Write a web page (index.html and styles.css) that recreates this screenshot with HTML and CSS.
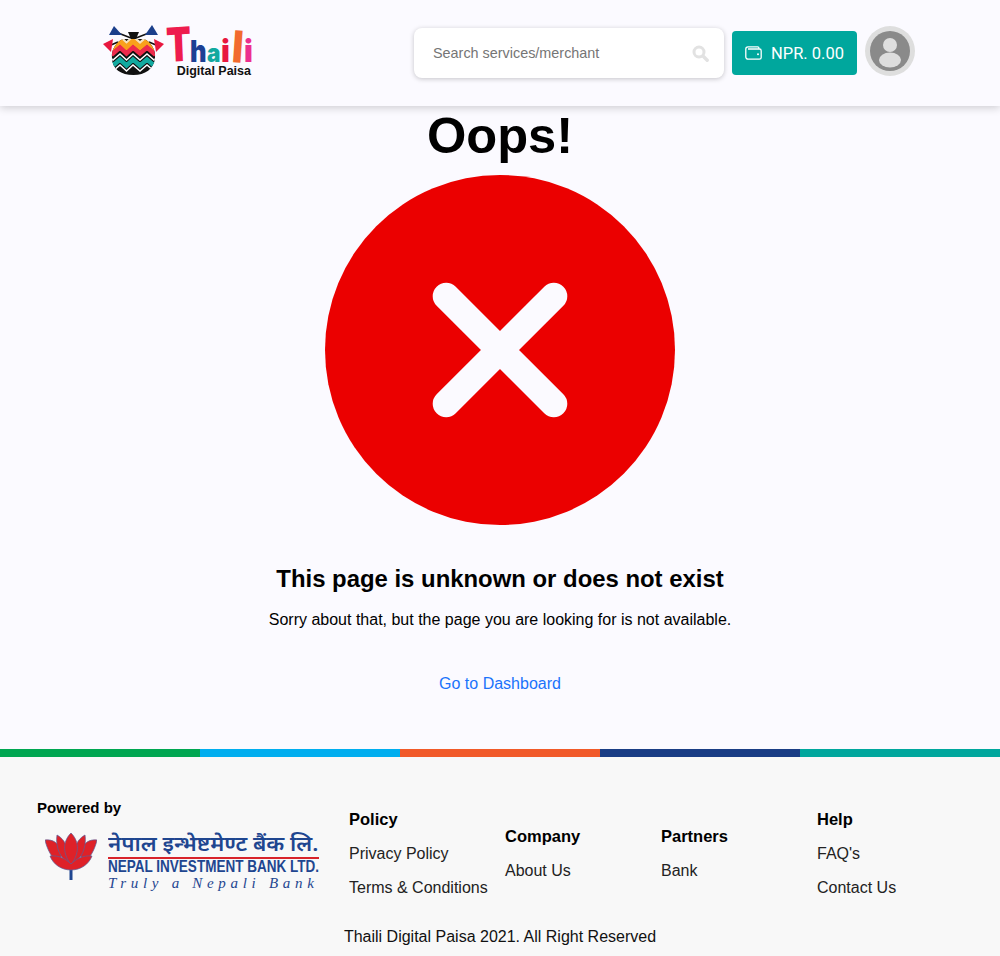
FILE: index.html
```html
<!DOCTYPE html>
<html lang="en">
<head>
<meta charset="utf-8">
<title>Thaili Digital Paisa</title>
<link rel="stylesheet" href="styles.css">
</head>
<body>
<header class="topbar">
  <a class="logo" href="#">
    <svg class="logo-bag" width="61" height="52" viewBox="0 0 61 52">
      <defs>
        <clipPath id="bag"><path d="M20 14 H41 C48 17 53 25 52 33 C51 44 42 50 30.500 50 C18 50 9 44 9 33 C8 25 13 17 20 14 Z"/></clipPath>
        <path id="zig" d="M3 0 L10 6 L17 0 L23.500 6 L30 0 L37 6 L44 0 L51 6 L58 0" fill="none"/>
      </defs>
      <path d="M10 6 L28 13 M51 6 L33 13 M8 20 L15 17 M53 20 L46 17" stroke="#111" stroke-width="1.500" fill="none"/>
      <path d="M11 1 L6 10 L19 10 Z" fill="#1b3f8b"/>
      <path d="M49 0 L55 10 L42 10 Z" fill="#1b3f8b"/>
      <path d="M0 19 L10 14 L8 27 Z" fill="#e8173f"/>
      <path d="M61 19 L51 14 L53 27 Z" fill="#e8173f"/>
      <path d="M25 7 H36 L33 14 H28 Z" fill="#111"/>
      <g clip-path="url(#bag)">
        <rect x="5" y="10" width="52" height="42" fill="#111"/>
        <use href="#zig" y="12" stroke="#f5e2c0" stroke-width="3"/>
        <use href="#zig" y="16.500" stroke="#f9a11b" stroke-width="5.500"/>
        <use href="#zig" y="22.500" stroke="#ee2a4b" stroke-width="4.500"/>
        <use href="#zig" y="29" stroke="#fff" stroke-width="1.500"/>
        <use href="#zig" y="34.500" stroke="#12a99f" stroke-width="4.500"/>
        <use href="#zig" y="40" stroke="#fff" stroke-width="1.500"/>
      </g>
    </svg>
    <span class="logo-text">
      <span class="logo-word"><b class="l-t">T</b><b class="l-h">h</b><b class="l-a">a</b><b class="l-i">i</b><b class="l-l">l</b><b class="l-j">i</b></span>
      <span class="logo-sub">Digital Paisa</span>
    </span>
  </a>
  <div class="actions">
    <div class="search">
      <span class="search-text">Search services/merchant</span>
      <svg class="search-icon" width="17" height="17" viewBox="0 0 17 17"><circle cx="7" cy="7" r="5" fill="none" stroke="#e2e2e2" stroke-width="3"/><path d="M11 11 L15.200 15.200" stroke="#e2e2e2" stroke-width="3.400" stroke-linecap="round"/></svg>
    </div>
    <a class="wallet" href="#">
      <svg width="17" height="14" viewBox="0 0 17 14"><path d="M14 3 V2.200 A1.400 1.400 0 0 0 12.600 .8 H3 A2.200 2.200 0 0 0 .8 3 V11 A2.200 2.200 0 0 0 3 13.200 H14.400 A1.800 1.800 0 0 0 16.200 11.400 V4.800 A1.800 1.800 0 0 0 14.400 3 H3" fill="none" stroke="#fff" stroke-width="1.300"/><circle cx="13" cy="8.200" r="1" fill="#fff"/></svg>
      <span>NPR. 0.00</span>
    </a>
    <div class="avatar">
      <svg width="40" height="40" viewBox="0 0 40 40"><circle cx="20" cy="20" r="20" fill="#8a8a8a"/><circle cx="20" cy="14" r="7" fill="#dedede"/><ellipse cx="20" cy="29" rx="11" ry="7.500" fill="#dedede"/></svg>
    </div>
  </div>
</header>

<main class="error">
  <h1 class="oops">Oops!</h1>
  <svg class="cross" width="350" height="350" viewBox="0 0 350 350">
    <circle cx="175" cy="175" r="175" fill="#eb0000"/>
    <path d="M121.200 121.200 L228.800 228.800 M228.800 121.200 L121.200 228.800" stroke="#fbfaff" stroke-width="27" stroke-linecap="round"/>
  </svg>
  <h2 class="title">This page is unknown or does not exist</h2>
  <p class="message">Sorry about that, but the page you are looking for is not available.</p>
  <a class="back" href="#">Go to Dashboard</a>
</main>

<div class="stripes"><span class="s1"></span><span class="s2"></span><span class="s3"></span><span class="s4"></span><span class="s5"></span></div>

<footer class="footer">
  <div class="footer-cols">
    <div class="powered">
      <div class="powered-label">Powered by</div>
      <div class="bank">
        <svg class="lotus" width="52" height="48" viewBox="0 0 52 48">
          <path d="M26 47 V32" stroke="#1f4690" stroke-width="3"/>
          <g fill="#de2128" stroke="#5a5f9a" stroke-width=".7">
            <path d="M0 7 C8 6 14 10 17 20 L14 30 C7 26 2 16 0 7 Z"/>
            <path d="M52 7 C44 6 38 10 35 20 L38 30 C45 26 50 16 52 7 Z"/>
            <path d="M12 2 C19 6 23 12 25 30 C16 28 10 14 12 2 Z"/>
            <path d="M40 2 C33 6 29 12 27 30 C36 28 42 14 40 2 Z"/>
            <path d="M26 0 C33 7 36 18 26 32 C16 18 19 7 26 0 Z"/>
            <path d="M5 23 C14 22 21 26 26 31 C31 26 38 22 47 23 C44 31 36 37 26 37 C16 37 8 31 5 23 Z"/>
          </g>
        </svg>
        <div class="bank-text">
          <div class="bank-np">नेपाल इन्भेष्टमेण्ट बैंक लि.</div>
          <div class="bank-en"><span class="bank-en-inner">NEPAL INVESTMENT BANK LTD.</span></div>
          <div class="bank-tag">Truly a Nepali Bank</div>
        </div>
      </div>
    </div>
    <nav class="col col-high">
      <h3>Policy</h3>
      <a href="#">Privacy Policy</a>
      <a href="#">Terms &amp; Conditions</a>
    </nav>
    <nav class="col col-mid">
      <h3>Company</h3>
      <a href="#">About Us</a>
    </nav>
    <nav class="col col-mid">
      <h3>Partners</h3>
      <a href="#">Bank</a>
    </nav>
    <nav class="col col-high">
      <h3>Help</h3>
      <a href="#">FAQ's</a>
      <a href="#">Contact Us</a>
    </nav>
  </div>
  <p class="copy">Thaili Digital Paisa 2021. All Right Reserved</p>
</footer>
</body>
</html>
```
FILE: styles.css
```css
* { box-sizing: border-box; }
html, body { margin: 0; padding: 0; }
body {
  width: 1000px;
  height: 956px;
  overflow: hidden;
  background: #fbfaff;
  color: #000;
  font-family: "Liberation Sans", Arial, sans-serif;
  font-size: 16px;
}
a { text-decoration: none; color: inherit; }

.topbar {
  height: 106px;
  padding: 25px 85px 0 103px;
  display: flex;
  justify-content: space-between;
  align-items: flex-start;
  background: #fbfaff;
  box-shadow: 0 2px 8px rgba(0,0,0,.18);
}
.logo { display: flex; gap: 3px; align-items: flex-start; }
.logo-bag { display: block; }
.logo-text { display: flex; flex-direction: column; align-items: flex-end; width: 86px; }
.logo-word { display: flex; align-items: baseline; width: 86px; height: 38px; margin-top: 1px; margin-bottom: 1px; font-family: Inter, sans-serif; line-height: 38px; }
.logo-word b { font-weight: 900; display: block; }
.l-t { color: #ee1c4e; font-size: 47px; width: 23px; transform: scaleX(.77) rotate(-3deg); transform-origin: left bottom; }
.l-h { color: #1c3f94; font-size: 30px; width: 17px; transform: scaleX(.85); transform-origin: left bottom; }
.l-a { color: #12a99f; font-size: 25px; width: 14px; transform: scaleX(.9); transform-origin: left bottom; }
.l-i { color: #e8173f; font-size: 30px; width: 10px; }
.l-l { color: #f26a2e; font-size: 44px; width: 13px; transform: rotate(4deg) scaleX(.85); transform-origin: left bottom; }
.l-j { color: #ec2f8f; font-size: 30px; width: 9px; }
.logo-sub { font-size: 12.500px; font-weight: 700; line-height: 13px; color: #111; margin-right: 2px; white-space: nowrap; }

.actions { display: flex; align-items: flex-start; gap: 8px; }
.search {
  width: 310px;
  height: 50px;
  margin-top: 3px;
  padding: 0 15px 0 19px;
  display: flex;
  align-items: center;
  justify-content: space-between;
  background: #fff;
  border-radius: 8px;
  box-shadow: 0 1px 5px rgba(0,0,0,.22);
}
.search-text { font-size: 14.400px; color: #757575; }
.wallet {
  width: 125px;
  height: 44px;
  margin-top: 6px;
  display: flex;
  align-items: center;
  justify-content: center;
  gap: 9px;
  background: #00a79d;
  border-radius: 4px;
  color: #fff;
  font-family: Roboto, sans-serif;
  font-size: 16.500px;
}
.avatar {
  width: 50px;
  height: 50px;
  margin-top: 1px;
  display: flex;
  align-items: center;
  justify-content: center;
  background: #dedede;
  border-radius: 50%;
}
.avatar svg { display: block; }

.error { display: flex; flex-direction: column; align-items: center; text-align: center; height: 643px; }
.oops { margin: 0; font-size: 50.600px; line-height: 60px; font-weight: 700; }
.cross { display: block; margin-top: 9px; }
.title { margin: 39px 0 0; font-size: 23.900px; line-height: 29px; font-weight: 700; }
.message { margin: 15px 0 0; font-size: 16px; line-height: 24px; }
.back { margin-top: 40px; color: #1a73fb; line-height: 24px; }

.stripes { display: flex; height: 8px; }
.stripes span { flex: 1; }
.s1 { background: #00a651; }
.s2 { background: #00aeef; }
.s3 { background: #f15a29; }
.s4 { background: #1a3d85; }
.s5 { background: #00a79d; }

.footer { height: 199px; background: #f8f8f8; padding: 43px 0 0 37px; }
.footer-cols { display: flex; }
.powered { width: 312px; }
.powered-label { font-size: 15px; font-weight: 700; line-height: 15px; }
.bank { display: flex; gap: 11px; margin: 18px 0 0 8px; color: #1f4690; }
.lotus { display: block; flex: none; }
.bank-text { width: 211px; }
.bank-np { font-family: "Noto Sans", "DejaVu Sans", sans-serif; font-size: 20px; font-weight: 600; line-height: 22px; height: 22px; white-space: nowrap; transform: scaleX(1.115); transform-origin: left; }
.bank-en { margin-top: 2px; border-top: 2px solid #d8232a; height: 18px; font-weight: 700; font-size: 16.700px; line-height: 16px; white-space: nowrap; }
.bank-en-inner { display: block; transform: scaleX(.81); transform-origin: left; }
.bank-tag { font-family: "Liberation Serif", serif; font-style: italic; font-size: 15px; letter-spacing: 4.700px; line-height: 16px; white-space: nowrap; }

.col { width: 156px; display: flex; flex-direction: column; align-items: flex-start; }
.col h3 { margin: 0 0 1px; font-size: 16.500px; line-height: 20px; font-weight: 700; }
.col a { margin-top: 14px; line-height: 20px; color: #222; white-space: nowrap; }
.col-high { padding-top: 9px; }
.col-mid { padding-top: 26px; }
.copy { margin: 27px 0 0 -37px; text-align: center; line-height: 24px; color: #111; }
```
